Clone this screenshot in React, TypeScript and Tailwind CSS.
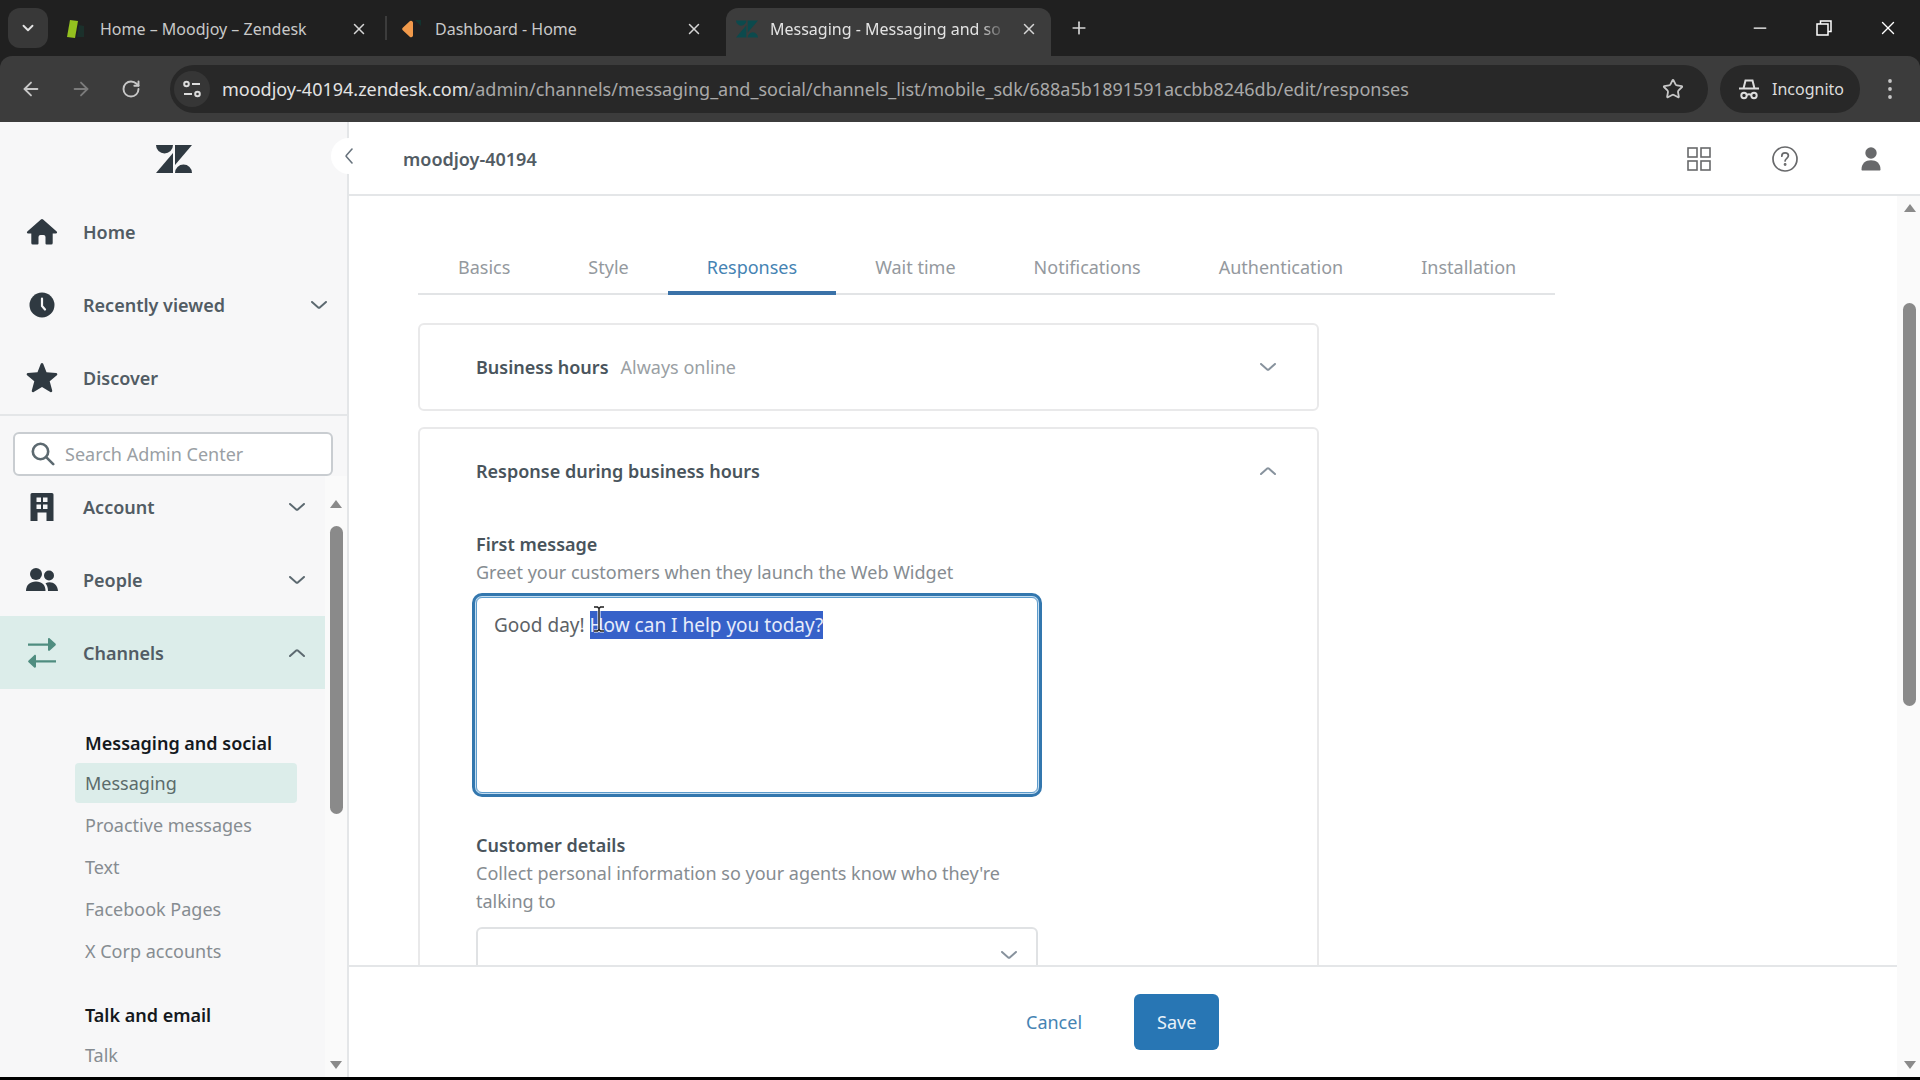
import { useEffect, useRef, useState } from "react"
import type { ReactNode } from "react"
import { ArrowLeft, ArrowRight, ChevronDown, Minus, Plus, RotateCw, Star, X } from "lucide-react"

interface ChevronProps {
  up?: boolean
  className?: string
}

function Chevron({ up = false, className = "" }: ChevronProps) {
  return (
    <svg viewBox="0 0 16 8" className={`h-2 w-4 ${className}`} fill="none" stroke="currentColor" strokeWidth="2" strokeLinecap="round">
      <path d={up ? "M1 7l6.2-5.4a1.2 1.2 0 0 1 1.6 0L15 7" : "M1 1l6.2 5.4a1.2 1.2 0 0 0 1.6 0L15 1"} />
    </svg>
  )
}

function ZendeskMark({ className }: { className: string }) {
  return (
    <svg viewBox="0 0 36 28" className={className} fill="currentColor">
      <path d="M0 0h17a8.5 8.5 0 0 1-17 0z" />
      <path d="M17 8v20H0z" />
      <path d="M19 0h17L19 20z" />
      <path d="M19 28a8.5 8.5 0 0 1 17 0z" />
    </svg>
  )
}

function HomeIcon() {
  return (
    <svg viewBox="0 0 32 28" className="h-7 w-8" fill="currentColor">
      <path d="M14.9 1.5a1.6 1.6 0 0 1 2.2 0l13.6 12c.8.8.3 2-.7 2h-3.300V25a1.500 1.500 0 0 1-1.500 1.500h-4.700a1 1 0 0 1-1-1V19a2 2 0 0 0-2-2h-3a2 2 0 0 0-2 2v6.500a1 1 0 0 1-1 1H6.800A1.500 1.500 0 0 1 5.300 25v-9.500H2c-1 0-1.500-1.200-.7-2z" />
    </svg>
  )
}

function ClockIcon() {
  return (
    <svg viewBox="0 0 26 26" className="size-[26px]">
      <circle cx="13" cy="13" r="12.500" fill="currentColor" />
      <path d="M13 6.500v7.500l3 3.500" fill="none" stroke="#f7f7f8" strokeWidth="2.200" strokeLinecap="round" strokeLinejoin="round" />
    </svg>
  )
}

function StarIcon() {
  return (
    <svg viewBox="0 0 32 32" className="size-8" fill="currentColor">
      <path d="M14.800 1.800c.5-1.100 1.900-1.100 2.400 0l3.300 8.500 9.600.6c1.200.1 1.700 1.500.8 2.300l-7.200 6 2.500 9.400c.3 1.200-.9 2-1.900 1.400L16 25l-8.300 5c-1 .6-2.200-.2-1.900-1.400l2.500-9.400-7.200-6c-.9-.8-.4-2.200.8-2.300l9.600-.6z" />
    </svg>
  )
}

function BuildingIcon() {
  return (
    <svg viewBox="0 0 24 28" className="h-7 w-6" fill="currentColor" fillRule="evenodd">
      <path d="M2 0h20a1.500 1.500 0 0 1 1.500 1.500V28h-7v-8.500h-9V28h-7V1.500A1.500 1.500 0 0 1 2 0zM6.500 4.500V9H11V4.500zM13 4.500V9h4.500V4.500zM6.500 11.500V16H11v-4.500zM13 11.500V16h4.500v-4.500z" />
    </svg>
  )
}

function PeopleIcon() {
  return (
    <svg viewBox="0 0 32 24" className="h-6 w-8" fill="currentColor">
      <circle cx="10" cy="6" r="6" />
      <circle cx="23" cy="7.500" r="5" />
      <path d="M0 23c0-6 4-9.500 10-9.500s9.500 3.500 9.500 9.500z" />
      <path d="M19.500 15.200c6-2.700 12 .8 12.500 7.800H22c0-3-.8-5.800-2.500-7.800z" />
    </svg>
  )
}

function ChannelsIcon() {
  return (
    <svg viewBox="0 0 28 32" className="h-8 w-7 text-[#4f8d80]" fill="currentColor">
      <path d="M0 6.500h20V2.200c0-1.100 1-1.500 1.800-.8l5.600 5.200c.6.600.6 1.300 0 1.800l-5.600 5.200c-.8.700-1.800.3-1.800-.8V8.800H0z" />
      <path d="M28 23.300H8V19c0-1.100-1-1.500-1.800-.8L.6 23.400c-.6.600-.6 1.300 0 1.800l5.600 5.200c.8.700 1.800.3 1.800-.8v-4H28z" />
    </svg>
  )
}

function IncognitoIcon() {
  return (
    <svg viewBox="0 0 22 22" className="size-[22px]" fill="none" stroke="currentColor" strokeWidth="2">
      <path d="M1 10.500h20M5.500 10.500L7.500 2.500h7l2 8" />
      <circle cx="6" cy="17.500" r="2.700" />
      <circle cx="16" cy="17.500" r="2.700" />
      <path d="M8.700 17c1.400-.8 3.200-.8 4.600 0" />
    </svg>
  )
}

function SiteSettingsIcon() {
  return (
    <svg viewBox="0 0 18 18" className="size-[18px]" fill="none" stroke="currentColor" strokeWidth="2">
      <circle cx="3.500" cy="4" r="2.300" />
      <path d="M9 4h8M1 14h8" />
      <circle cx="14.500" cy="14" r="2.300" />
    </svg>
  )
}

interface BrowserTabProps {
  title: string
  icon: ReactNode
  active?: boolean
}

function BrowserTab({ title, icon, active = false }: BrowserTabProps) {
  return (
    <div className={`flex h-12 w-[325px] items-start rounded-t-xl pt-[9px] pr-3 pl-2.5 ${active ? "bg-[#3c3c3c]" : ""}`}>
      <span className="flex h-6 w-[22px] shrink-0 items-center">{icon}</span>
      <span
        className={`ml-3 min-w-0 flex-1 text-base leading-6 whitespace-nowrap ${
          active ? "mask-r-from-88% text-[#e3e3e3]" : "text-[#c9c9c9]"
        }`}
      >
        {title}
      </span>
      <button aria-label="Close tab" className="ml-3 flex h-6 w-5 items-center justify-center text-[#d5d5d5]">
        <X className="size-[18px]" />
      </button>
    </div>
  )
}

function BrowserChrome() {
  return (
    <header className="shrink-0 bg-[#202020]">
      <div className="flex h-14 items-end justify-between">
        <div className="flex items-end">
          <button aria-label="Search tabs" className="mr-2 mb-2 ml-2 flex h-10 w-10 items-center justify-center rounded-xl bg-[#383838] text-[#e3e3e3]">
            <ChevronDown className="size-[18px]" strokeWidth={2.5} />
          </button>
          <BrowserTab
            title="Home – Moodjoy – Zendesk"
            icon={
              <svg viewBox="0 0 22 18" className="h-[18px] w-[22px]">
                <path d="M4 0l8 1-3 17-8-1z" fill="#94c11f" />
                <path d="M13 5l5 1v11h-7z" fill="#1b302b" />
              </svg>
            }
          />
          <span className="mx-1 mb-4 h-6 w-0.5 bg-[#3c3c3c]" />
          <BrowserTab
            title="Dashboard - Home"
            icon={
              <svg viewBox="0 0 22 18" className="h-[18px] w-[22px]">
                <path d="M9 1a2 2 0 0 1 3 1.500v13A2 2 0 0 1 9 17L2 10.500a2 2 0 0 1 0-3z" fill="#f19a4b" />
                <path d="M14 0h6v6z" fill="#12332f" />
              </svg>
            }
          />
          <span className="w-2.5" />
          <BrowserTab active title="Messaging - Messaging and so" icon={<ZendeskMark className="h-[18px] w-[22px] text-[#0c4a4d]" />} />
          <button aria-label="New tab" className="mb-4 ml-4 flex h-6 w-6 items-center justify-center text-[#d5d5d5]">
            <Plus className="size-5" />
          </button>
        </div>
        <div className="mb-3 flex text-white">
          <button aria-label="Minimize" className="flex h-8 w-16 items-center justify-center">
            <Minus className="size-5" strokeWidth={1.5} />
          </button>
          <button aria-label="Restore" className="flex h-8 w-16 items-center justify-center">
            <svg viewBox="0 0 16 16" className="size-4" fill="none" stroke="currentColor" strokeWidth="1.500">
              <path d="M1 4h11v11H1zM4.500 4V1H15v10.500h-3" />
            </svg>
          </button>
          <button aria-label="Close window" className="flex h-8 w-16 items-center justify-center">
            <X className="size-[22px]" strokeWidth={1.5} />
          </button>
        </div>
      </div>

      {/* Toolbar */}
      <div className="flex h-[66px] items-center rounded-t-xl bg-[#3c3c3c] text-[#c7c7c7]">
        <button aria-label="Back" className="ml-5 flex w-[22px] justify-center">
          <ArrowLeft className="size-[22px]" />
        </button>
        <button aria-label="Forward" className="ml-7 flex w-[22px] justify-center text-[#7b7b7b]">
          <ArrowRight className="size-[22px]" />
        </button>
        <button aria-label="Reload" className="ml-7 flex w-[22px] justify-center">
          <RotateCw className="size-5" strokeWidth={2.3} />
        </button>
        <div className="ml-7 flex h-12 min-w-0 flex-1 items-center rounded-full bg-[#282828] pr-6 pl-1">
          <button aria-label="View site information" className="flex size-9 shrink-0 items-center justify-center rounded-full bg-[#363636] text-[#dcdcdc]">
            <SiteSettingsIcon />
          </button>
          <p className="ml-3 min-w-0 flex-1 overflow-hidden text-[18px] leading-7 whitespace-nowrap text-[#a9a9a9]">
            <span className="text-[#e3e3e3]">moodjoy-40194.zendesk.com</span>
            /admin/channels/messaging_and_social/channels_list/mobile_sdk/688a5b1891591accbb8246db/edit/responses
          </p>
          <button aria-label="Bookmark this tab">
            <Star className="size-[22px]" />
          </button>
        </div>
        <button className="ml-3 flex h-12 w-[140px] items-center gap-3 rounded-full bg-[#282828] pl-[18px] text-base text-[#dcdcdc]">
          <IncognitoIcon />
          Incognito
        </button>
        <button aria-label="Browser menu" className="mx-[18px] flex w-6 justify-center">
          <svg viewBox="0 0 4 22" className="h-[22px] w-1" fill="currentColor">
            <circle cx="2" cy="3" r="1.900" />
            <circle cx="2" cy="11" r="1.900" />
            <circle cx="2" cy="19" r="1.900" />
          </svg>
        </button>
      </div>
    </header>
  )
}

interface NavRowProps {
  label: string
  icon: ReactNode
  chevron?: "up" | "down"
  active?: boolean
}

function NavRow({ label, icon, chevron, active = false }: NavRowProps) {
  return (
    <button className={`flex h-[73px] w-full items-center pr-5 text-left ${active ? "bg-[#dcedea]" : ""}`}>
      <span className="flex w-[83px] shrink-0 justify-center text-[#2f3941]">{icon}</span>
      <span className="flex-1 text-[18px] leading-7 font-semibold text-[#525c64]">{label}</span>
      {chevron && <Chevron up={chevron === "up"} className="text-[#5c6970]" />}
    </button>
  )
}

interface ScrollbarProps {
  className: string
  thumb: string
}

function Scrollbar({ className, thumb }: ScrollbarProps) {
  return (
    <div className={`flex shrink-0 flex-col items-center bg-[#fafafa] text-[#8a8a8a] ${className}`}>
      <svg viewBox="0 0 12 8" className="h-2 w-3 shrink-0" fill="currentColor">
        <path d="M6 0l6 8H0z" />
      </svg>
      <div className={`w-[13px] rounded-full bg-[#8a8a8a] ${thumb}`} />
      <svg viewBox="0 0 12 8" className="mt-auto h-2 w-3 shrink-0" fill="currentColor">
        <path d="M6 8L0 0h12z" />
      </svg>
    </div>
  )
}

const navGroups = [
  {
    title: "Messaging and social",
    links: ["Messaging", "Proactive messages", "Text", "Facebook Pages", "X Corp accounts"],
  },
  { title: "Talk and email", links: ["Talk"] },
]

function Sidebar() {
  return (
    <aside className="relative flex w-[349px] shrink-0 flex-col border-r-2 border-[#e4e6e8] bg-[#f7f7f8]">
      <div className="flex h-[73px] shrink-0 items-center justify-center">
        <ZendeskMark className="h-7 w-9 text-[#2f3941]" />
      </div>
      <button
        aria-label="Collapse sidebar"
        className="absolute top-4 -right-5 z-10 flex size-9 items-center justify-center rounded-full bg-white text-[#68737d]"
      >
        <svg viewBox="0 0 8 16" className="h-4 w-2" fill="none" stroke="currentColor" strokeWidth="1.600" strokeLinecap="round">
          <path d="M7 1L1.500 7.200a1.200 1.200 0 0 0 0 1.600L7 15" />
        </svg>
      </button>

      <nav aria-label="Main" className="shrink-0 border-b-2 border-[#e4e6e8]">
        <NavRow label="Home" icon={<HomeIcon />} />
        <NavRow label="Recently viewed" icon={<ClockIcon />} chevron="down" />
        <NavRow label="Discover" icon={<StarIcon />} />
      </nav>

      <div className="shrink-0 pt-4 pr-3.5 pl-[13px]">
        <div className="flex h-11 items-center gap-2.5 rounded-md border-2 border-[#c9cdd1] bg-white pl-4">
          <svg viewBox="0 0 24 24" className="size-6 shrink-0 text-[#5c6970]" fill="none" stroke="currentColor" strokeWidth="2.600" strokeLinecap="round">
            <circle cx="9.500" cy="9.500" r="7.700" />
            <path d="M15.200 15.200l7 7" />
          </svg>
          <input
            type="search"
            aria-label="Search Admin Center"
            placeholder="Search Admin Center"
            className="w-full min-w-0 text-[18px] leading-7 outline-none placeholder:text-[#9a9fa4]"
          />
        </div>
      </div>

      <div className="flex min-h-0 flex-1">
        <nav aria-label="Admin Center" className="min-w-0 flex-1 overflow-hidden">
          <div className="-mt-1.5">
            <NavRow label="Account" icon={<BuildingIcon />} chevron="down" />
            <NavRow label="People" icon={<PeopleIcon />} chevron="down" />
            <NavRow label="Channels" icon={<ChannelsIcon />} chevron="up" active />
          </div>
          <div className="mt-10 ml-[75px] flex w-[222px] flex-col gap-[30px]">
            {navGroups.map((group) => (
              <section key={group.title}>
                <h2 className="mb-1.5 px-2.5 text-[18px] leading-7 font-semibold text-[#14191d]">{group.title}</h2>
                <ul className="flex flex-col gap-0.5">
                  {group.links.map((link) => (
                    <li key={link}>
                      <a
                        href="#"
                        className={`block rounded-sm px-2.5 text-[18px] leading-10 ${
                          link === "Messaging" ? "bg-[#dcedea] text-[#5b6b6b]" : "text-[#868c91]"
                        }`}
                      >
                        {link}
                      </a>
                    </li>
                  ))}
                </ul>
              </section>
            ))}
          </div>
        </nav>
        <Scrollbar className="w-[22px] pt-6 pb-2" thumb="mt-[18px] h-[288px]" />
      </div>
    </aside>
  )
}

const tabs = ["Basics", "Style", "Responses", "Wait time", "Notifications", "Authentication", "Installation"]

interface CardProps {
  title: string
  note?: string
  open?: boolean
  children?: ReactNode
}

function Card({ title, note, open = false, children }: CardProps) {
  return (
    <section className="max-w-[901px] rounded-md border-2 border-[#e9e9ea]">
      <button aria-expanded={open} className="flex h-[84px] w-full items-center gap-3 pr-[41px] pl-14 text-left text-[18px] leading-7">
        <span className="font-semibold text-[#49545c]">{title}</span>
        {note && <span className="text-[#9a9fa4]">{note}</span>}
        <Chevron up={open} className="ml-auto text-[#87929d]" />
      </button>
      {children}
    </section>
  )
}

function ResponsesForm() {
  const [message, setMessage] = useState("Good day! How can I help you today?")
  const messageRef = useRef<HTMLTextAreaElement>(null)

  useEffect(() => {
    const el = messageRef.current
    if (!el) return
    el.focus({ preventScroll: true })
    el.setSelectionRange(10, el.value.length)
  }, [])

  return (
    <form className="mx-14 mt-[17px] max-w-[562px] text-[18px] leading-7" onSubmit={(e) => e.preventDefault()}>
      <label htmlFor="first-message" className="block font-semibold text-[#49545c]">
        First message
      </label>
      <p className="text-[#868c91]">Greet your customers when they launch the Web Widget</p>
      <div className="relative mt-[11px]">
        <textarea
          id="first-message"
          ref={messageRef}
          value={message}
          onChange={(e) => setMessage(e.target.value)}
          spellCheck={false}
          className="block h-49 w-full resize-none rounded-md border border-[#5d9bcb] px-[17px] py-[13px] text-[19px] text-[#5c6266] shadow-[0_0_0_1px_#c4def2,0_0_0_4px_#3377ae] outline-none selection:bg-[#3661c9] selection:text-[#e6ecfb]"
        />
        {/* I-beam pointer */}
        <svg viewBox="0 0 12 28" className="pointer-events-none absolute top-2 left-[117px] h-7 w-3" fill="none">
          <path d="M1 2h3.500L6 3.500 7.500 2H11M6 3.500v21M1 26h3.500L6 24.500 7.500 26H11" stroke="#fff" strokeWidth="3" />
          <path d="M1 2h3.500L6 3.500 7.500 2H11M6 3.500v21M1 26h3.500L6 24.500 7.500 26H11" stroke="#1d1d1d" strokeWidth="1.500" />
        </svg>
      </div>
      <label htmlFor="customer-details" className="mt-[38px] block font-semibold text-[#49545c]">
        Customer details
      </label>
      <p className="text-[#868c91]">Collect personal information so your agents know who they're talking to</p>
      <div className="relative mt-3">
        <select id="customer-details" className="block h-14 w-full appearance-none rounded-md border-2 border-[#e0e2e4] px-4">
          <option value="" />
        </select>
        <Chevron className="pointer-events-none absolute top-6 right-[21px] text-[#87929d]" />
      </div>
    </form>
  )
}

function MainPanel() {
  const [activeTab, setActiveTab] = useState("Responses")

  return (
    <main className="flex min-w-0 flex-1 flex-col">
      <header className="flex h-[74px] shrink-0 items-center border-b-2 border-[#e4e6e8] pt-0.5 pr-9 pl-[54px] text-[#68696b]">
        <h1 className="flex-1 text-[18px] leading-7 font-semibold text-[#525c64]">moodjoy-40194</h1>
        <button aria-label="Products" className="flex w-[26px] justify-center">
          <svg viewBox="0 0 24 24" className="size-6" fill="none" stroke="currentColor" strokeWidth="1.600">
            <rect x="1" y="1" width="9" height="9" />
            <rect x="14" y="1" width="9" height="9" />
            <rect x="1" y="14" width="9" height="9" />
            <rect x="14" y="14" width="9" height="9" />
          </svg>
        </button>
        <button aria-label="Help" className="ml-[60px] flex w-[26px] justify-center">
          <svg viewBox="0 0 26 26" className="size-[26px]" fill="none" stroke="currentColor" strokeWidth="1.700" strokeLinecap="round">
            <circle cx="13" cy="13" r="12" />
            <path d="M9.800 10.200c0-2 1.400-3.300 3.300-3.300s3.300 1.200 3.300 2.900c0 2.300-3.300 2.700-3.300 5.200" />
            <circle cx="13.100" cy="18.500" r=".6" fill="currentColor" />
          </svg>
        </button>
        <button aria-label="Profile" className="ml-[60px] flex w-[26px] justify-center">
          <svg viewBox="0 0 20 24" className="h-6 w-5" fill="currentColor">
            <circle cx="10" cy="6" r="5.700" />
            <path d="M.5 22.500c0-6 4-9.200 9.500-9.200s9.500 3.200 9.500 9.200c0 .7-.4 1-1 1h-17c-.6 0-1-.3-1-1z" />
          </svg>
        </button>
      </header>

      <div className="flex min-h-0 flex-1">
        <div className="flex min-w-0 flex-1 flex-col">
          <div className="min-h-0 flex-1 overflow-hidden pt-11 pl-[69px]">
            <div role="tablist" className="flex h-[55px] w-fit border-b-2 border-[#e2e4e6] pl-px text-[18px] leading-7">
              {tabs.map((tab) => (
                <button
                  key={tab}
                  role="tab"
                  aria-selected={tab === activeTab}
                  onClick={() => setActiveTab(tab)}
                  className={`-mb-0.5 border-b-4 px-[39px] pt-0.5 ${
                    tab === activeTab ? "border-[#3a72a8] text-[#4583b3]" : "border-transparent text-[#94999e]"
                  }`}
                >
                  {tab}
                </button>
              ))}
            </div>
            <div className="mt-7 flex flex-col gap-4">
              <Card title="Business hours" note="Always online" />
              <Card title="Response during business hours" open>
                <ResponsesForm />
              </Card>
            </div>
          </div>

          <footer className="flex h-28 shrink-0 items-center border-t-2 border-[#e4e6e8] pl-[637px] text-[18px] leading-7">
            <button className="h-14 px-10 text-[#4583b3]">Cancel</button>
            <button className="ml-3 h-14 rounded-md bg-[#2876b4] px-[23px] text-[#e8f1f8]">Save</button>
          </footer>
        </div>
        <Scrollbar className="w-[23px] pt-2 pb-2 pl-0.5" thumb="mt-[91px] h-[403px]" />
      </div>
    </main>
  )
}

export default function App() {
  return (
    <div className="flex h-screen flex-col overflow-hidden border-b-3 border-black bg-white font-['Noto_Sans','Open_Sans',sans-serif]">
      <BrowserChrome />
      <div className="flex min-h-0 flex-1">
        <Sidebar />
        <MainPanel />
      </div>
    </div>
  )
}
